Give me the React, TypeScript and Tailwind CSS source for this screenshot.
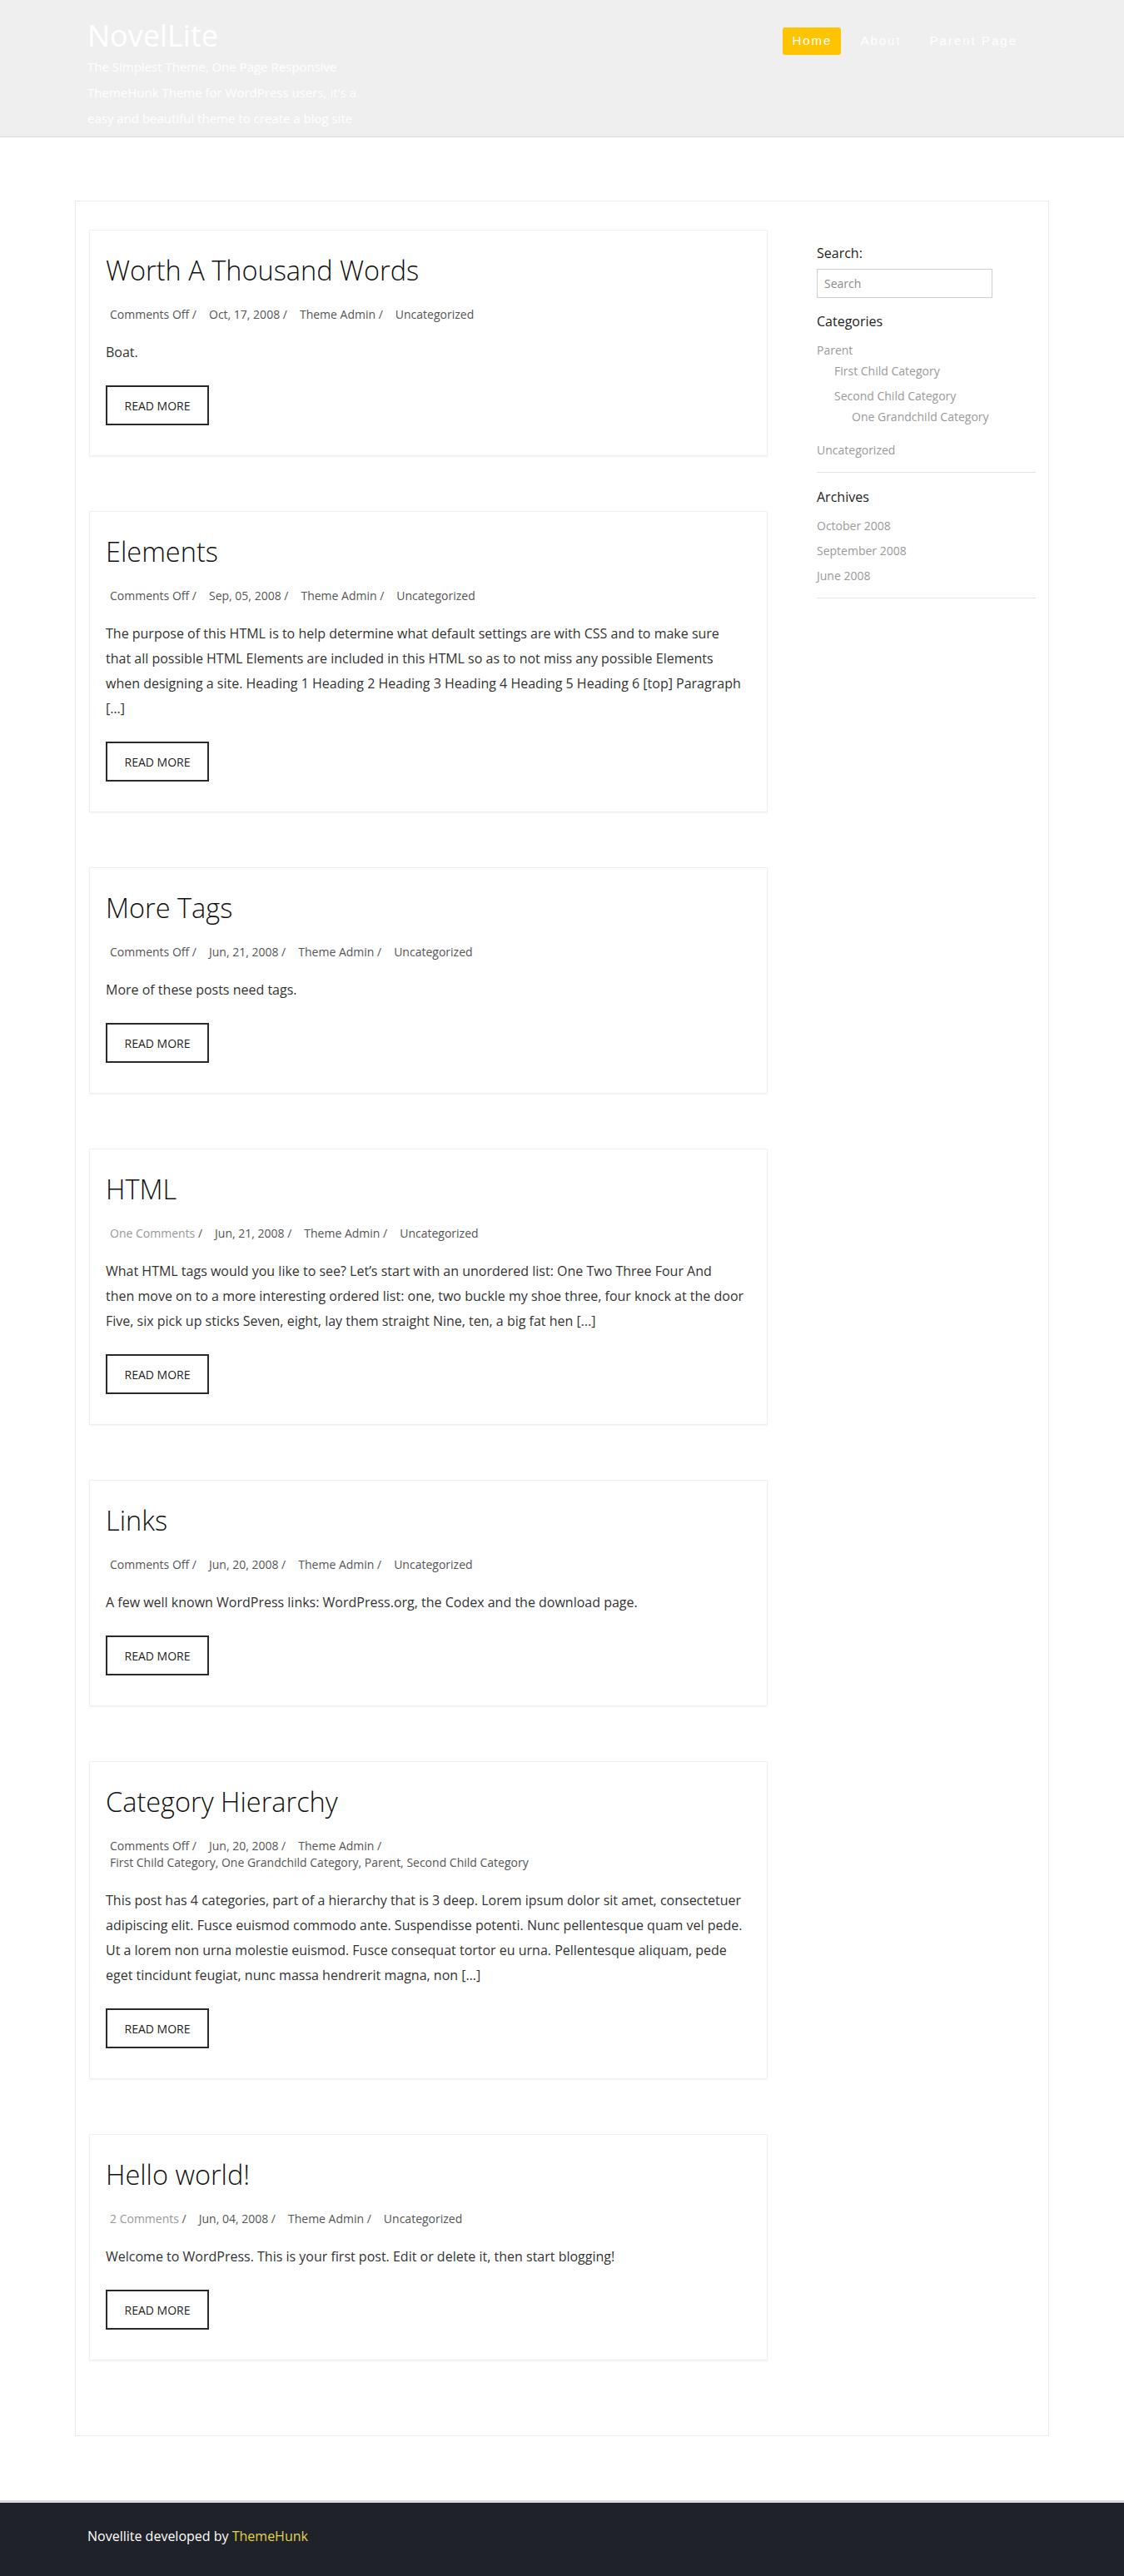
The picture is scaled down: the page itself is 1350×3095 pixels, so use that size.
type Post = {
  title: string;
  comments: string;
  commentsLink?: boolean;
  date: string;
  cats: string;
  body: string[];
};

const posts: Post[] = [
  {
    title: "Worth A Thousand Words",
    comments: "Comments Off",
    date: "Oct, 17, 2008",
    cats: "Uncategorized",
    body: ["Boat."],
  },
  {
    title: "Elements",
    comments: "Comments Off",
    date: "Sep, 05, 2008",
    cats: "Uncategorized",
    body: [
      "The purpose of this HTML is to help determine what default settings are with CSS and to make sure",
      "that all possible HTML Elements are included in this HTML so as to not miss any possible Elements",
      "when designing a site. Heading 1 Heading 2 Heading 3 Heading 4 Heading 5 Heading 6 [top] Paragraph",
      "[…]",
    ],
  },
  {
    title: "More Tags",
    comments: "Comments Off",
    date: "Jun, 21, 2008",
    cats: "Uncategorized",
    body: ["More of these posts need tags."],
  },
  {
    title: "HTML",
    comments: "One Comments",
    commentsLink: true,
    date: "Jun, 21, 2008",
    cats: "Uncategorized",
    body: [
      "What HTML tags would you like to see? Let’s start with an unordered list: One Two Three Four And",
      "then move on to a more interesting ordered list: one, two buckle my shoe three, four knock at the door",
      "Five, six pick up sticks Seven, eight, lay them straight Nine, ten, a big fat hen […]",
    ],
  },
  {
    title: "Links",
    comments: "Comments Off",
    date: "Jun, 20, 2008",
    cats: "Uncategorized",
    body: ["A few well known WordPress links: WordPress.org, the Codex and the download page."],
  },
  {
    title: "Category Hierarchy",
    comments: "Comments Off",
    date: "Jun, 20, 2008",
    cats: "First Child Category, One Grandchild Category, Parent, Second Child Category",
    body: [
      "This post has 4 categories, part of a hierarchy that is 3 deep. Lorem ipsum dolor sit amet, consectetuer",
      "adipiscing elit. Fusce euismod commodo ante. Suspendisse potenti. Nunc pellentesque quam vel pede.",
      "Ut a lorem non urna molestie euismod. Fusce consequat tortor eu urna. Pellentesque aliquam, pede",
      "eget tincidunt feugiat, nunc massa hendrerit magna, non […]",
    ],
  },
  {
    title: "Hello world!",
    comments: "2 Comments",
    commentsLink: true,
    date: "Jun, 04, 2008",
    cats: "Uncategorized",
    body: ["Welcome to WordPress. This is your first post. Edit or delete it, then start blogging!"],
  },
];

function PostCard({ post }: { post: Post }) {
  return (
    <article className="mb-[66px] border border-[#efefef] bg-white px-[19px] pb-[36px] pt-[26px] shadow-[0_1px_2px_rgba(0,0,0,0.06)]">
      <h2 className="text-[32.5px] font-light leading-[44px] text-[#111]">{post.title}</h2>
      <div className="mt-[21px] pl-[5px] text-[14px] leading-[20px] text-[#555]">
        <span className="mr-[15px] inline-block">
          <span className={post.commentsLink ? "text-[#999]" : ""}>{post.comments}</span> /
        </span>
        <span className="mr-[15px] inline-block">{post.date} /</span>
        <span className="mr-[15px] inline-block">Theme Admin /</span>
        <span className="inline-block">{post.cats}</span>
      </div>
      <p className="mt-[20px] text-[16px] leading-[30px] text-[#333]">
        {post.body.map((line, i) => (
          <span key={i}>
            {i > 0 && <br />}
            {line}
          </span>
        ))}
      </p>
      <a className="mt-[25px] inline-flex h-[48px] w-[124px] items-center justify-center border-2 border-[#2a2a2a] text-[14px] text-[#222]">
        READ MORE
      </a>
    </article>
  );
}

function Sidebar() {
  return (
    <aside className="ml-[59px] w-[263px] pt-[51px]">
      <h3 className="text-[16px] leading-[22px] text-[#222]">Search:</h3>
      <input
        placeholder="Search"
        className="mt-[8px] h-[35px] w-[211px] border border-[#cfcfcf] px-[8px] text-[14px] text-[#555] outline-none placeholder:text-[#8a8a8a]"
      />

      <div className="mt-[17px] border-b border-[#e3e3e3] pb-[9px]">
        <h3 className="text-[16px] leading-[22px] text-[#222]">Categories</h3>
        <ul className="mt-[11px] text-[14px] leading-[25px] text-[#9a9a9a]">
          <li className="pb-[5px]">
            Parent
            <ul className="pl-[21px]">
              <li className="pb-[5px]">First Child Category</li>
              <li className="pb-[5px]">
                Second Child Category
                <ul className="pl-[21px]">
                  <li className="pb-[5px]">One Grandchild Category</li>
                </ul>
              </li>
            </ul>
          </li>
          <li className="pb-[5px]">Uncategorized</li>
        </ul>
      </div>

      <div className="mt-[18px] border-b border-[#e3e3e3] pb-[9px]">
        <h3 className="text-[16px] leading-[22px] text-[#222]">Archives</h3>
        <ul className="mt-[11px] text-[14px] leading-[25px] text-[#9a9a9a]">
          <li className="pb-[5px]">October 2008</li>
          <li className="pb-[5px]">September 2008</li>
          <li className="pb-[5px]">June 2008</li>
        </ul>
      </div>
    </aside>
  );
}

export default function App() {
  return (
    <div className="min-h-[3095px] bg-white font-['Open_Sans',sans-serif]">
      <header className="h-[165px] border-b border-[#dadada] bg-[#efefef]">
        <div className="mx-auto flex w-[1140px] justify-between">
          <div className="pt-[21px] text-white">
            <div className="text-[36px] leading-[44px]">NovelLite</div>
            <div className="text-[15px] leading-[31px]">
              <p>The Simplest Theme, One Page Responsive</p>
              <p>ThemeHunk Theme for WordPress users, it's a</p>
              <p>easy and beautiful theme to create a blog site</p>
            </div>
          </div>
          <nav className="flex h-fit gap-[12px] pr-[12px] pt-[33px] font-['Liberation_Sans',Arial,sans-serif] text-[15px] tracking-[2px] text-white">
            <a className="flex h-[33px] items-center rounded-[3px] bg-[#fec400] px-[11px]">Home</a>
            <a className="flex h-[33px] items-center px-[11px]">About</a>
            <a className="flex h-[33px] items-center px-[11px]">Parent Page</a>
          </nav>
        </div>
      </header>

      <main className="mx-auto mt-[76px] flex w-[1170px] border border-[#ececec] pl-[16px]">
        <section className="w-[815px] pb-[24px] pt-[34px]">
          {posts.map((p) => (
            <PostCard key={p.title} post={p} />
          ))}
        </section>
        <Sidebar />
      </main>

      <footer className="mt-[77px] h-[92px] border-t-[3px] border-[#d9dadd] bg-[#1f2228] pt-[28px]">
        <div className="mx-auto w-[1140px] text-[16px] leading-[24px] text-white">
          Novellite developed by <a className="text-[#e2d34a]">ThemeHunk</a>
        </div>
      </footer>
    </div>
  );
}
